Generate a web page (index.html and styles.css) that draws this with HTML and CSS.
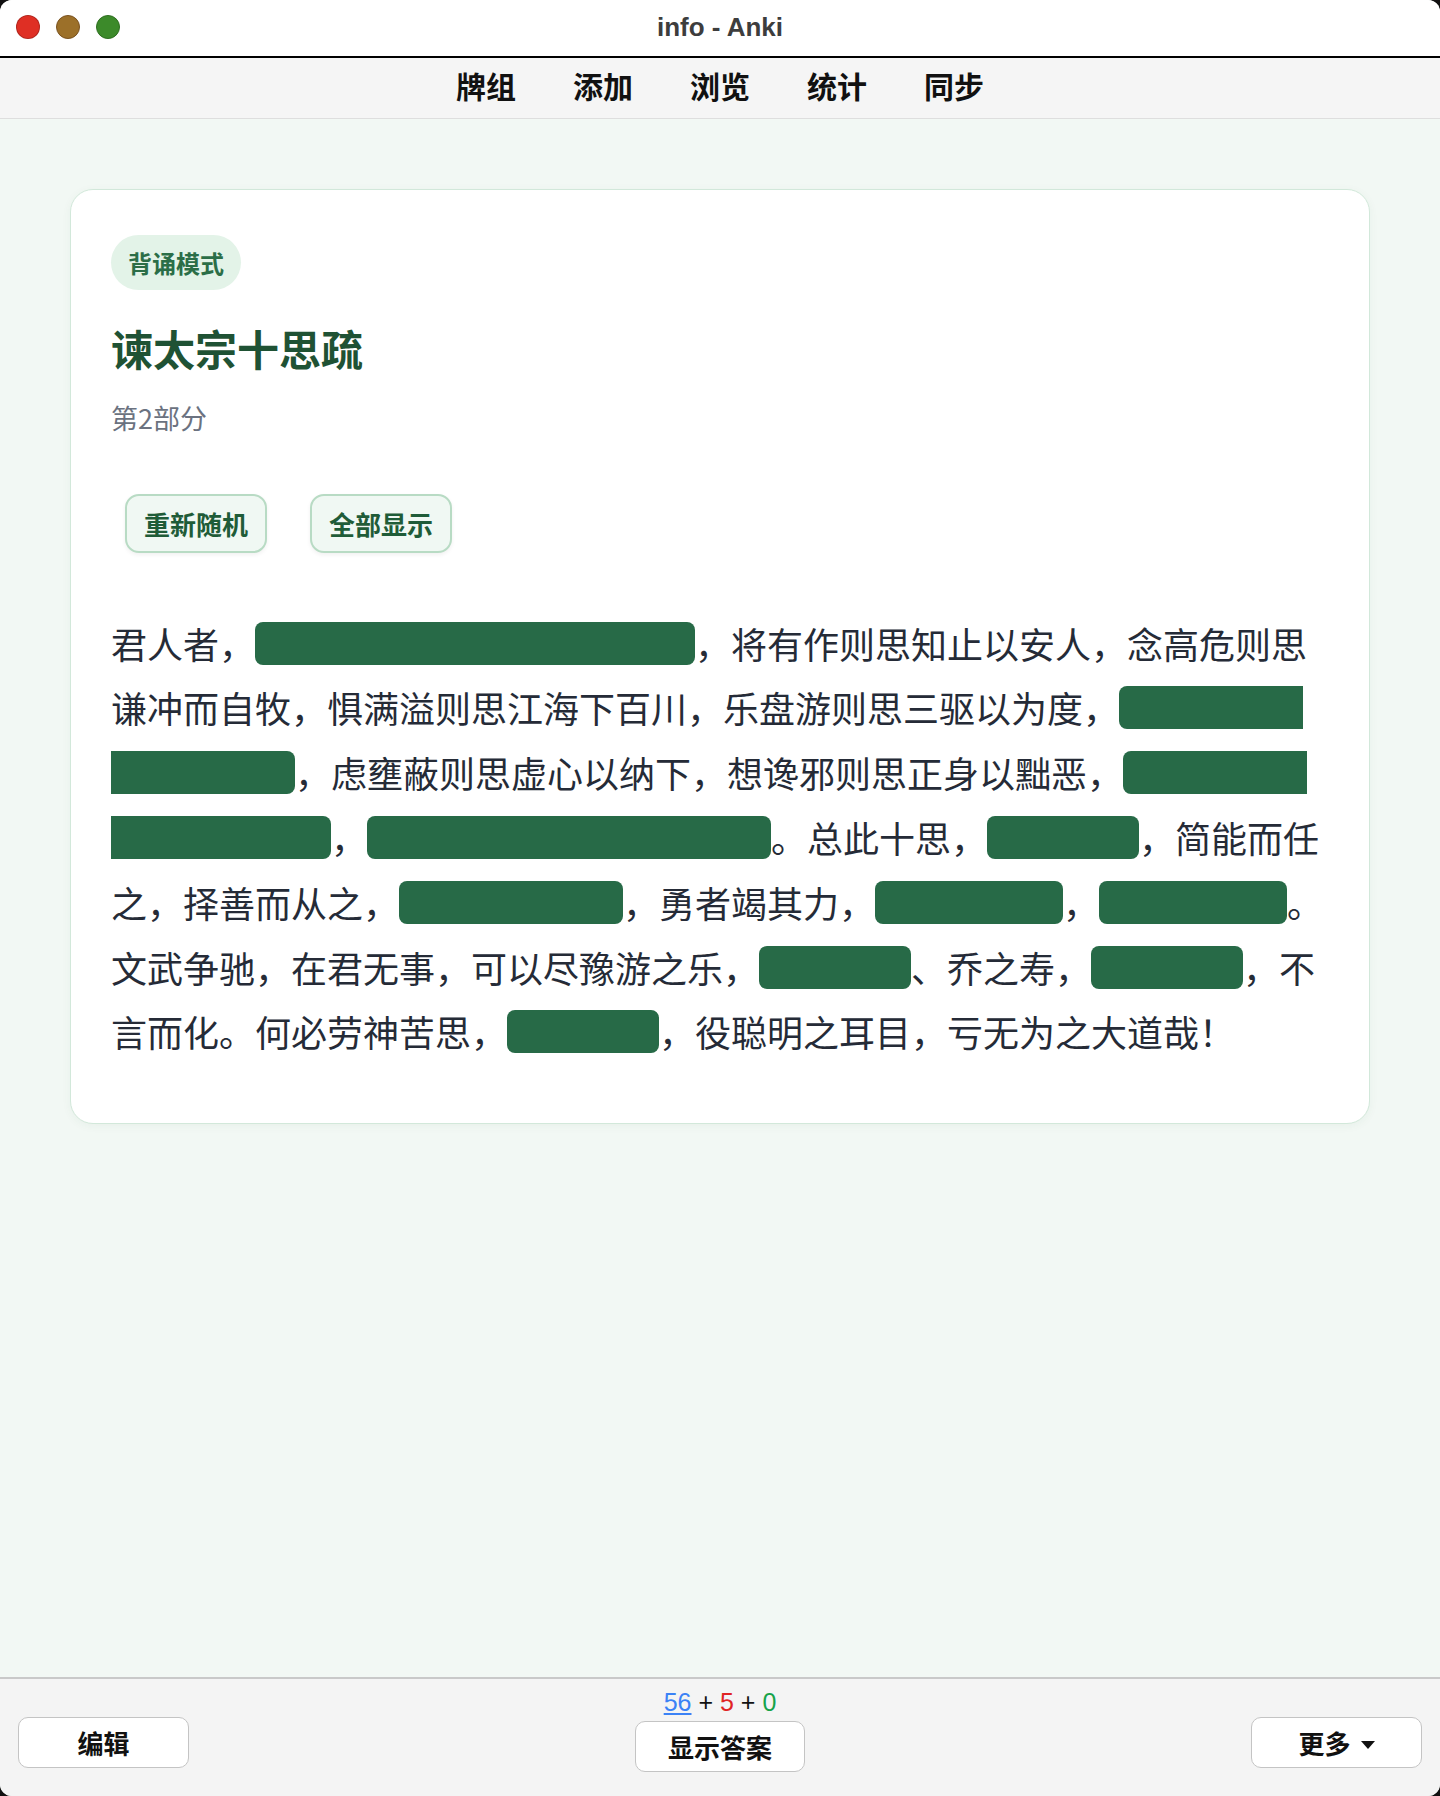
FILE: index.html
```html
<!DOCTYPE html>
<html lang="zh-CN">
<head>
  <meta charset="UTF-8">
  <meta name="viewport" content="width=device-width, initial-scale=1.0">
  <title>info - Anki</title>
  <link rel="stylesheet" href="styles.css">
</head>
<body>

  <div class="window">
    <!-- Title bar -->
    <div class="titlebar">
      <div class="lights">
        <span class="light red"></span>
        <span class="light yellow"></span>
        <span class="light green"></span>
      </div>
      <div class="title">info - Anki</div>
      <div></div>
    </div>

    <!-- Top toolbar -->
    <nav class="toolbar">
      <a href="#">牌组</a>
      <a href="#">添加</a>
      <a href="#">浏览</a>
      <a href="#">统计</a>
      <a href="#">同步</a>
    </nav>

    <!-- Card area -->
    <main class="main">
      <div class="card">
        <span class="badge">背诵模式</span>
        <h1 class="card-title">谏太宗十思疏</h1>
        <p class="card-sub">第2部分</p>

        <div class="actions">
          <button type="button" class="btn">重新随机</button>
          <button type="button" class="btn">全部显示</button>
        </div>

        <p class="passage">君人者，<span class="cloze">诚能见可欲则思知足以自戒</span>，将有作则思知止以安人，念高危则思<wbr>谦冲而自牧，惧满溢则思江海下百川，乐盘游则思三驱以为度，<span class="cloze">忧懈怠则思<wbr>慎始而敬终</span>，虑壅蔽则思虚心以纳下，想谗邪则思正身以黜恶，<span class="cloze">恩所加则思<wbr>无因喜以谬赏</span>，<span class="cloze">罚所及则思无因怒而滥刑</span>。总此十思，<span class="cloze">宏兹九德</span>，简能而任<wbr>之，择善而从之，<span class="cloze">则智者尽其谋</span>，勇者竭其力，<span class="cloze">仁者播其惠</span>，<span class="cloze">信者效其忠</span>。<wbr>文武争驰，在君无事，可以尽豫游之乐，<span class="cloze">可以养松</span>、乔之寿，<span class="cloze">鸣琴垂拱</span>，不<wbr>言而化。何必劳神苦思，<span class="cloze">代下司职</span>，役聪明之耳目，亏无为之大道哉！</p>
      </div>
    </main>

    <!-- Bottom bar -->
    <div class="bottombar">
      <button type="button" class="bar-btn">编辑</button>
      <div class="center">
        <div class="counts"><u class="new">56</u> + <span class="lrn">5</span> + <span class="due">0</span></div>
        <button type="button" class="bar-btn answer">显示答案</button>
      </div>
      <button type="button" class="bar-btn">更多
        <svg width="14" height="8" viewBox="0 0 14 8"><path d="M0 0h14L7 8z" fill="#111"/></svg>
      </button>
    </div>
  </div>

</body>
</html>
```

FILE: styles.css
```css
body {
  margin: 0;
  background-color: #111;
  font-family: "Noto Sans CJK SC", "Noto Sans", sans-serif;
}
.window {
  height: 1796px;
  border-radius: 12px;
  overflow: hidden;
  display: flex;
  flex-direction: column;
  background-color: #f2f8f4;
}
.titlebar {
  height: 56px;
  background-color: #fff;
  border-bottom: 2px solid #000;
  display: grid;
  grid-template-columns: 1fr auto 1fr;
  align-items: center;
}
.lights {
  display: flex;
  gap: 16px;
  padding-left: 16px;
  padding-bottom: 2px;
}
.light {
  width: 22px;
  height: 22px;
  border-radius: 50%;
  border: 1px solid rgba(0, 0, 0, 0.2);
}
.red { background-color: #df2f24; }
.yellow { background-color: #9c7029; border-color: #7a5220; }
.green { background-color: #3c8a2a; border-color: #2e6e20; }
.title {
  font-family: "Liberation Sans", Arial, sans-serif;
  font-weight: bold;
  font-size: 26px;
  color: #3d3d3d;
  padding-bottom: 2px;
}
.toolbar {
  height: 54px;
  padding-bottom: 6px;
  background-color: #f5f5f5;
  border-bottom: 1px solid #dedede;
  display: flex;
  justify-content: center;
  align-items: center;
  gap: 57px;
}
.toolbar a {
  color: #111;
  text-decoration: none;
  font-size: 30px;
  font-weight: bold;
  line-height: 1;
}
.main {
  flex: 1;
  padding: 70px 70px 0;
}
.card {
  background-color: #fff;
  border: 1px solid #d2e8da;
  border-radius: 23px;
  box-shadow: 0 2px 10px rgba(40, 100, 60, 0.05);
  padding: 45px 40px 59px;
}
.badge {
  display: inline-block;
  height: 55px;
  line-height: 55px;
  padding: 0 17px;
  border-radius: 28px;
  background-color: #e3f3e8;
  color: #2b6e47;
  font-size: 24px;
  font-weight: bold;
}
.card-title {
  margin: 31px 0 0;
  font-size: 42px;
  line-height: 1.3;
  color: #1f5234;
  font-weight: bold;
}
.card-sub {
  margin: 22px 0 0;
  font-size: 27px;
  line-height: 39px;
  color: #6b7280;
}
.actions {
  display: flex;
  gap: 43px;
  padding-left: 14px;
  margin-top: 57px;
}
.btn {
  height: 59px;
  padding: 0 17px;
  background-color: #f0f8f3;
  border: 2px solid #b8dbc4;
  border-radius: 14px;
  box-shadow: 0 2px 4px rgba(0, 0, 0, 0.06);
  color: #1f5c38;
  font-family: inherit;
  font-size: 26px;
  font-weight: bold;
  cursor: pointer;
}
.passage {
  margin: 58px 0 0;
  font-size: 36px;
  line-height: 1.8;
  color: #252b37;
}
.cloze {
  font-family: "Liberation Sans", "Noto Sans CJK SC", sans-serif;
  line-height: 1;
  background-color: #276a47;
  color: transparent;
  border-radius: 8px;
  padding: 1px 4px;
  vertical-align: 3px;
}
.bottombar {
  height: 117px;
  background-color: #f4f4f4;
  border-top: 2px solid #c9c9c9;
  display: flex;
  justify-content: space-between;
  align-items: flex-start;
  padding: 0 18px;
}
.bar-btn {
  width: 171px;
  height: 51px;
  margin-top: 38px;
  background-color: #fff;
  border: 1.5px solid #c4c4c4;
  border-radius: 10px;
  font-family: inherit;
  font-size: 26px;
  font-weight: bold;
  color: #111;
  display: flex;
  align-items: center;
  justify-content: center;
  gap: 10px;
}
.bar-btn svg {
  margin-top: 4px;
}
.center {
  display: flex;
  flex-direction: column;
  align-items: center;
}
.counts {
  margin-top: 8px;
  font-family: "Liberation Sans", Arial, sans-serif;
  font-size: 25px;
  line-height: 30px;
  color: #111;
}
.new { color: #3b82f6; }
.lrn { color: #e02424; }
.due { color: #16a34a; }
.bar-btn.answer {
  width: 170px;
  margin-top: 4px;
}
```
